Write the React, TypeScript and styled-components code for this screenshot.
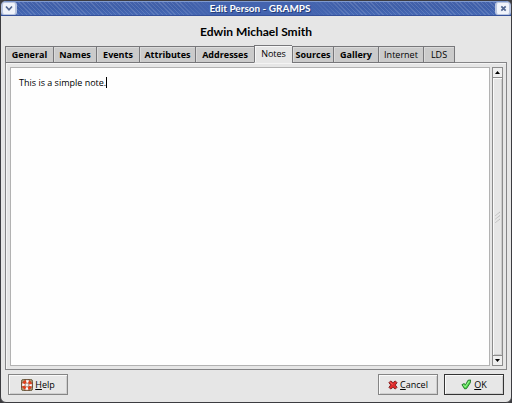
import React, { useLayoutEffect, useRef, useState } from "react";
import styled, { createGlobalStyle, css } from "styled-components";

const GlobalStyle = createGlobalStyle`
  * { box-sizing: border-box; }
  body { margin: 0; background: #3c3c40; font-family: "Open Sans", "Noto Sans", sans-serif; font-size: 9px; line-height: 12px; color: #000; }
  button, textarea { font: inherit; color: inherit; margin: 0; padding: 0; }
`;

const Window = styled.main`
  display: flex;
  flex-direction: column;
  min-height: 100vh;
  background: #e6e6e6;
  border: 1px solid #3c3c40;
  border-radius: 6px;
  overflow: hidden;
`;

const TitleBar = styled.header`
  display: flex;
  height: 15px;
  flex: none;
  border-top: 1px solid #7f9ad0;
  border-bottom: 1px solid #35519a;
  background: linear-gradient(90deg, transparent 35%, #4464af 42% 60%, transparent 67%),
    repeating-linear-gradient(45deg, #ffffff20 0 1px, transparent 1px 3px),
    linear-gradient(#4462aa, #3e5fa9 45%, #4769b5);
`;

const WindowTitle = styled.h1`
  flex: 1;
  margin: 0;
  padding-left: 8px;
  text-align: center;
  font-family: Lato, sans-serif;
  font-size: 10px;
  line-height: 12px;
  font-weight: 700;
  color: #fff;
  text-shadow: 1px 1px 0 #263e78;
`;

const TitleButton = styled.button`
  display: flex;
  align-items: center;
  justify-content: center;
  width: 16px;
  border: 2px solid #b9c5df;
  border-top-width: 1px;
  border-bottom-width: 1px;
  border-radius: 3px;
  background: #f0f3fa;
`;

const PersonName = styled.h2`
  margin: 7px 0 5px;
  text-align: center;
  font-family: Lato, sans-serif;
  font-size: 12px;
  line-height: 17px;
  font-weight: 700;
`;

const TabStrip = styled.div`
  display: flex;
  align-items: flex-end;
  margin: 0 4px -1px;
  height: 18px;
  position: relative;
`;

const Tab = styled.button<{ $width: number; $bold?: boolean; $active?: boolean }>`
  width: ${(p) => p.$width}px;
  height: 17px;
  border: 1px solid #77777a;
  border-right-width: 0;
  background: #cbcbcb;
  box-shadow: inset 1px 1px 0 #dadada;
  font-weight: ${(p) => (p.$bold ? 700 : 400)};
  white-space: nowrap;
  &:last-child { border-right-width: 1px; }
  ${(p) =>
    p.$active &&
    css`
      height: 18px;
      border-bottom-color: #e6e6e6;
      background: #e6e6e6;
      box-shadow: inset 1px 1px 0 #f7f7f7;
    `}
`;

const Page = styled.section`
  display: flex;
  flex: 1;
  gap: 2px;
  margin: 0 4px;
  padding: 4px 3px 3px 4px;
  border: 1px solid #858587;
  box-shadow: inset 1px 1px 0 #f4f4f4;
`;

const Editor = styled.div`
  position: relative;
  display: flex;
  flex: 1;
  border: 1px solid #b2b2b2;
  background: #fefefe;
`;

const NoteText = styled.textarea`
  flex: 1;
  border: 0;
  outline: 0;
  padding: 9px 8px;
  resize: none;
  overflow: hidden;
  background: transparent;
  caret-color: transparent;
`;

const Caret = styled.span`
  position: absolute;
  top: 9px;
  width: 1px;
  height: 11px;
  background: #000;
`;

const ScrollBar = styled.div`
  display: flex;
  flex-direction: column;
  width: 11px;
  border: 1px solid #8c8c8c;
  background: #e4e4e4;
`;

const Arrow = styled.button`
  display: flex;
  align-items: center;
  justify-content: center;
  height: 9px;
  flex: none;
  border: 0;
  background: #efefef;
`;

const Thumb = styled.div`
  display: flex;
  flex: 1;
  align-items: center;
  justify-content: center;
  border: 1px solid #8c8c8c;
  border-width: 1px 0;
  background: #e6e6e6;
  box-shadow: inset 1px 1px 0 #fafafa, inset -1px -1px 0 #cccccc;
`;

const Actions = styled.footer`
  display: flex;
  gap: 6px;
  padding: 4px 7px 7px;
`;

const ActionButton = styled.button<{ $start?: boolean; $default?: boolean }>`
  display: flex;
  align-items: center;
  justify-content: center;
  gap: 2px;
  width: 60px;
  height: 21px;
  margin-right: ${(p) => (p.$start ? "auto" : "0")};
  border: 1px solid ${(p) => (p.$default ? "#343434" : "#858585")};
  background: #e7e7e7;
  box-shadow: inset 1px 1px 0 #fafafa, inset -1px -1px 0 #cfcfcf;
  u { text-underline-offset: 1px; }
`;

const tabs = [
  { label: "General", width: 48, bold: true },
  { label: "Names", width: 43, bold: true },
  { label: "Events", width: 43, bold: true },
  { label: "Attributes", width: 56, bold: true },
  { label: "Addresses", width: 59, bold: true },
  { label: "Notes", width: 38 },
  { label: "Sources", width: 41, bold: true },
  { label: "Gallery", width: 45, bold: true },
  { label: "Internet", width: 45 },
  { label: "LDS", width: 32 },
];

function HelpIcon() {
  return (
    <svg width="12" height="12" viewBox="0 0 13 13" aria-hidden="true">
      <rect x=".5" y=".5" width="12" height="12" rx="2" fill="#b5a47a" stroke="#5d5132" />
      <circle cx="6.5" cy="6.5" r="4" fill="none" stroke="#fff" strokeWidth="3.2" />
      <circle cx="6.5" cy="6.5" r="4" fill="none" stroke="#e0401a" strokeWidth="3.2" strokeDasharray="3.6 2.683" strokeDashoffset="-1.3" />
      <circle cx="6.5" cy="6.5" r="2.1" fill="#f2f2f2" stroke="#7c2c1c" strokeWidth=".5" />
      <circle cx="6.5" cy="6.5" r="5.7" fill="none" stroke="#7c2c1c" strokeWidth=".5" />
    </svg>
  );
}

function CancelIcon() {
  return (
    <svg width="10" height="10" viewBox="0 0 11 11" aria-hidden="true">
      <path d="M1 3 3 1l2.5 2L8 1l2 2-2 2.5 2 2.5-2 2-2.5-2L3 10 1 8l2-2.5Z" fill="#df2b2b" stroke="#7d1b1b" />
      <path d="m2.5 2.6 2.7 2.3" stroke="#f38080" strokeWidth=".8" />
    </svg>
  );
}

function OkIcon() {
  return (
    <svg width="11" height="11" viewBox="0 0 12 12" aria-hidden="true">
      <path d="M1 6.2 3.3 5 5 6.3 7.6 1.4 10.4 1 10.2 4 6 10.5 4 10.8Z" fill="#4ddb4b" stroke="#176b1d" strokeWidth=".9" strokeLinejoin="round" />
      <path d="m2.4 6.5 2.3 2.1L9 2.2" fill="none" stroke="#b7f8ae" strokeWidth=".9" />
    </svg>
  );
}

export default function App() {
  const [active, setActive] = useState("Notes");
  const [note, setNote] = useState("This is a simple note.");
  const [caret, setCaret] = useState(0);
  const field = useRef<HTMLTextAreaElement>(null);

  useLayoutEffect(() => {
    const context = document.createElement("canvas").getContext("2d");
    if (!context || !field.current) return;
    const style = getComputedStyle(field.current);
    context.font = `${style.fontSize} ${style.fontFamily}`;
    setCaret(Math.round(context.measureText(note).width + parseFloat(style.paddingLeft)));
  }, [note]);

  return (
    <>
      <GlobalStyle />
      <Window>
        <TitleBar>
          <TitleButton aria-label="Window menu">
            <svg width="8" height="7" viewBox="0 0 8 7"><path d="m1 1.5 3 3.3 3-3.3" fill="none" stroke="#50658f" strokeWidth="1.7" /></svg>
          </TitleButton>
          <WindowTitle>Edit Person - GRAMPS</WindowTitle>
          <TitleButton aria-label="Close">
            <svg width="7" height="7" viewBox="0 0 7 7"><path d="m1.3 1.3 4.4 4.4m0-4.4L1.3 5.7" stroke="#50658f" strokeWidth="1.7" /></svg>
          </TitleButton>
        </TitleBar>
        <PersonName>Edwin Michael Smith</PersonName>
        <TabStrip role="tablist">
          {tabs.map((t) => (
            <Tab key={t.label} role="tab" aria-selected={t.label === active} $width={t.width} $bold={t.bold} $active={t.label === active} onClick={() => setActive(t.label)}>
              {t.label}
            </Tab>
          ))}
        </TabStrip>
        <Page role="tabpanel" aria-label={active}>
          <Editor>
            <NoteText ref={field} aria-label="Note" spellCheck={false} value={note} onChange={(e) => setNote(e.target.value)} />
            <Caret style={{ left: caret }} />
          </Editor>
          <ScrollBar>
            <Arrow aria-label="Scroll up"><svg width="5" height="3" viewBox="0 0 5 3"><path d="M0 3 2.5 0 5 3Z" /></svg></Arrow>
            <Thumb>
              <svg width="6" height="12" viewBox="0 0 6 12"><path d="M.5 4.5 5 1M.5 8 5 4.5M.5 11.5 5 8" stroke="#a8a8a8" strokeWidth=".9" strokeDasharray="1 .5" /></svg>
            </Thumb>
            <Arrow aria-label="Scroll down"><svg width="5" height="3" viewBox="0 0 5 3"><path d="M0 0 2.5 3 5 0Z" /></svg></Arrow>
          </ScrollBar>
        </Page>
        <Actions>
          <ActionButton $start><HelpIcon /><span><u>H</u>elp</span></ActionButton>
          <ActionButton><CancelIcon /><span><u>C</u>ancel</span></ActionButton>
          <ActionButton $default><OkIcon /><span><u>O</u>K</span></ActionButton>
        </Actions>
      </Window>
    </>
  );
}
